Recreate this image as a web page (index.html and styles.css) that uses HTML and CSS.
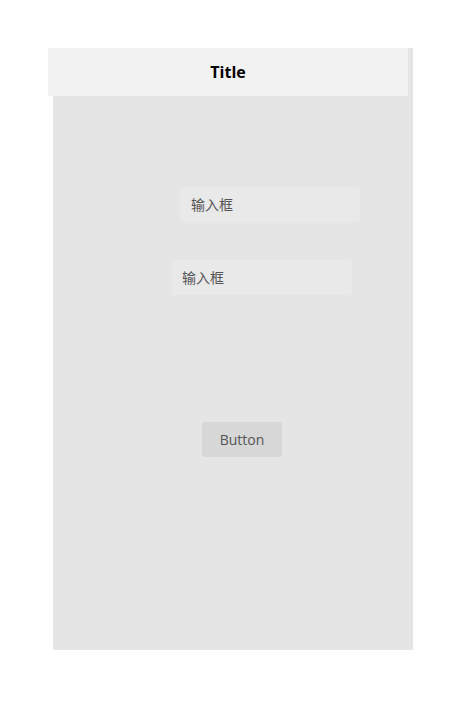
FILE: index.html
```html
<!DOCTYPE html>
<html lang="zh">
<head>
<meta charset="utf-8">
<title>Title</title>
<link rel="stylesheet" href="styles.css">
</head>
<body>
<div class="screen">
  <header class="topbar">Title</header>
  <div class="content">
    <div class="field field-a">输入框</div>
    <div class="field field-b">输入框</div>
    <div class="btn">Button</div>
  </div>
</div>
</body>
</html>
```
FILE: styles.css
```css
html, body {
  margin: 0;
  padding: 0;
  background: #ffffff;
}
body {
  font-family: "Open Sans", "Noto Sans CJK SC", sans-serif;
}
.screen {
  margin: 48px 0 0 53px;
  width: 360px;
  height: 602px;
  background: #e5e5e5;
  display: flex;
  flex-direction: column;
}
.topbar {
  margin-left: -5px;
  width: 360px;
  height: 48px;
  box-sizing: border-box;
  padding-bottom: 1px;
  background: #f2f2f2;
  display: flex;
  align-items: center;
  justify-content: center;
  font-weight: 700;
  font-size: 16px;
  color: #000;
}
.content {
  display: flex;
  flex-direction: column;
  align-items: flex-start;
}
.field {
  width: 180px;
  height: 35px;
  box-sizing: border-box;
  padding-bottom: 2px;
  background: #e9e9e9;
  border-radius: 3px;
  display: flex;
  align-items: center;
  font-family: "Noto Sans CJK SC", sans-serif;
  font-size: 14px;
  line-height: 18px;
  color: #555555;
}
.field-a {
  margin: 91px 0 0 127px;
  padding-left: 11px;
}
.field-b {
  margin: 38px 0 0 119px;
  padding-left: 10px;
}
.btn {
  margin: 127px 0 0 149px;
  width: 80px;
  height: 35px;
  box-sizing: border-box;
  padding-bottom: 1px;
  background: #d7d7d7;
  border-radius: 3px;
  display: flex;
  align-items: center;
  justify-content: center;
  font-size: 14px;
  color: #555555;
}
```
